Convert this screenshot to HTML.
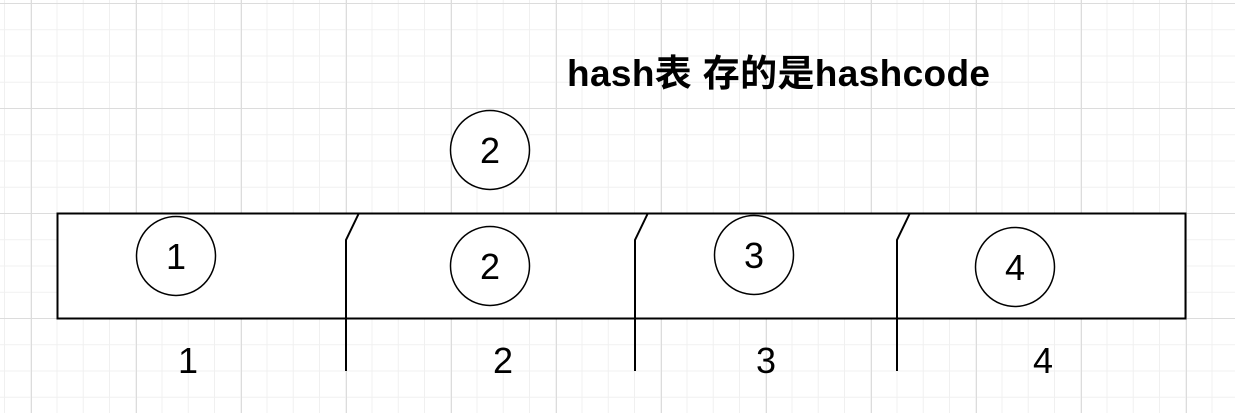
<!DOCTYPE html>
<html><head><meta charset="utf-8"><style>
html,body{margin:0;padding:0;width:1235px;height:413px;overflow:hidden;background:#fff;}
</style></head><body>
<svg width="1235" height="413" xmlns="http://www.w3.org/2000/svg" style="position:absolute;left:0;top:0">
<defs>
<pattern id="minor" x="4" y="3" width="26.25" height="26.25" patternUnits="userSpaceOnUse">
<path d="M0.5 0V26.25M0 0.5H26.25" stroke="#f0f0f0" stroke-width="1" fill="none"/>
</pattern>
<pattern id="major" x="31" y="3" width="105" height="105" patternUnits="userSpaceOnUse">
<path d="M0.5 0V105M0 0.5H105" stroke="#dcdcdc" stroke-width="1" fill="none"/>
</pattern>
</defs>
<rect width="1235" height="413" fill="url(#minor)"/>
<rect width="1235" height="413" fill="url(#major)"/>
<rect x="57.5" y="213.5" width="1128" height="105" fill="#fff" stroke="#000" stroke-width="2"/>
<g stroke="#000" stroke-width="2" fill="none">
<path d="M359 213L346 240V371"/>
<path d="M648 213L635 240V371"/>
<path d="M910 213L897 240V371"/>
</g>
<g stroke="#000" stroke-width="1.5" fill="#fff">
<circle cx="176" cy="256" r="39.5"/>
<circle cx="490" cy="150" r="39.5"/>
<circle cx="490" cy="266" r="39.5"/>
<circle cx="754" cy="255" r="39.5"/>
<circle cx="1015" cy="267" r="39.5"/>
</g>
<g font-family="Liberation Sans, sans-serif" font-size="36" text-anchor="middle" fill="#000">
<text x="176" y="269">1</text>
<text x="490" y="163">2</text>
<text x="490" y="279">2</text>
<text x="754" y="268">3</text>
<text x="1015" y="280">4</text>
<text x="188" y="373">1</text>
<text x="503" y="373">2</text>
<text x="766" y="373">3</text>
<text x="1043" y="373">4</text>
</g>
<text x="567" y="86" font-family="Liberation Sans, 'Noto Sans CJK SC', sans-serif" font-weight="bold" font-size="37" fill="#000" textLength="423">hash表 存的是hashcode</text>
</svg>
</body></html>
